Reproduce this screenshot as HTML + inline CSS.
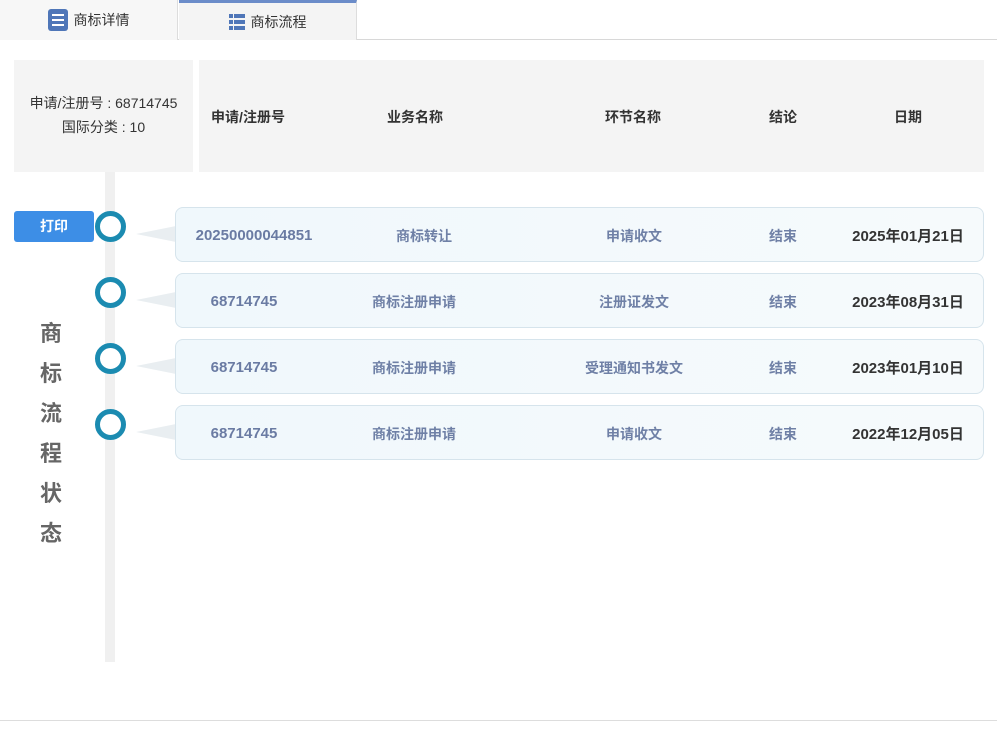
<!DOCTYPE html>
<html><head><meta charset="utf-8"><style>
*{margin:0;padding:0;box-sizing:border-box}
body{width:997px;height:729px;background:#fff;font-family:"Liberation Sans","Noto Sans CJK SC",sans-serif;position:relative;overflow:hidden}
.abs{position:absolute}
.tabbar{left:0;top:0;width:997px;height:40px;border-bottom:1px solid #d8d8d8;background:#fff}
.tab{top:0;height:40px;background:#f7f7f7;font-size:14px;color:#333;display:flex;align-items:center;justify-content:center;gap:6px}
.hdr{background:#f4f4f4;height:112px;top:60px}
.hd{font-size:14px;font-weight:bold;color:#333;top:107px;transform:translateX(-50%);white-space:nowrap}
.card{left:175px;width:809px;height:55px;border:1px solid #d6e4ec;border-radius:8px;background:linear-gradient(90deg,#f0f8fc,#f6fafc)}
.c{position:absolute;top:18px;font-size:14px;font-weight:bold;color:#6f80a6;transform:translateX(-50%);white-space:nowrap}
.n{font-size:15px;top:17px;font-weight:900;color:#6a7ba3;line-height:20px;top:16px}
.d{color:#333;font-size:15px;top:17px}
.circ{left:95px;width:31px;height:31px;border:5px solid #1b8bb1;border-radius:50%;background:#fff}
.tri{left:136px;width:0;height:0;border-top:8px solid transparent;border-bottom:8px solid transparent;border-right:40px solid #e9eef1}
</style></head><body>
<div class="abs tabbar"></div>
<div class="abs tab" style="left:0;width:178px;border-right:1px solid #ddd"><svg width="20" height="22" viewBox="0 0 20 22"><rect x="0" y="0" width="20" height="22" rx="3" fill="#4f76b8"/><rect x="4" y="5" width="12" height="2" fill="#fff"/><rect x="4" y="10" width="12" height="2" fill="#fff"/><rect x="4" y="15" width="12" height="2" fill="#fff"/></svg>商标详情</div>
<div class="abs tab" style="left:179px;width:178px;background:#f4f4f4;border-top:3px solid #6b8cc9;border-right:1px solid #ddd;height:40px"><svg width="16" height="16" viewBox="0 0 16 16" fill="#4f76b8"><rect x="0" y="0" width="4" height="4"/><rect x="5" y="0" width="11" height="4"/><rect x="0" y="6" width="4" height="4"/><rect x="5" y="6" width="11" height="4"/><rect x="0" y="12" width="4" height="4"/><rect x="5" y="12" width="11" height="4"/></svg>商标流程</div>
<div class="abs hdr" style="left:14px;width:179px"></div>
<div class="abs hdr" style="left:199px;width:785px"></div>
<div class="abs" style="left:14px;width:179px;top:91px;text-align:center;font-size:14px;color:#333;line-height:24px">申请/注册号 : 68714745<br>国际分类 : 10</div>
<div class="abs hd" style="left:248px">申请/注册号</div>
<div class="abs hd" style="left:415px">业务名称</div>
<div class="abs hd" style="left:633px">环节名称</div>
<div class="abs hd" style="left:783px">结论</div>
<div class="abs hd" style="left:908px">日期</div>
<div class="abs" style="left:105px;top:172px;width:10px;height:490px;background:#f0f0f0"></div>
<div class="abs" style="left:14px;top:211px;width:80px;height:31px;background:#3d8ee6;border-radius:3px;color:#fff;font-size:14px;font-weight:bold;text-align:center;line-height:31px">打印</div>
<div class="abs" style="left:36px;top:314px;width:30px;font-size:22px;font-weight:bold;color:#666;line-height:40px;text-align:center">商<br>标<br>流<br>程<br>状<br>态</div>
<div class="abs circ" style="top:211px"></div><div class="abs tri" style="top:226px"></div>
<div class="abs circ" style="top:277px"></div><div class="abs tri" style="top:292px"></div>
<div class="abs circ" style="top:343px"></div><div class="abs tri" style="top:358px"></div>
<div class="abs circ" style="top:409px"></div><div class="abs tri" style="top:424px"></div>
<div class="abs card" style="top:207px"><span class="c n" style="left:78px;top:18px"><b>20250000044851</b></span><span class="c" style="left:248px">商标转让</span><span class="c" style="left:458px">申请收文</span><span class="c" style="left:607px">结束</span><span class="c d" style="left:732px">2025年01月21日</span></div>
<div class="abs card" style="top:273px"><span class="c n" style="left:68px;top:18px"><b>68714745</b></span><span class="c" style="left:238px">商标注册申请</span><span class="c" style="left:458px">注册证发文</span><span class="c" style="left:607px">结束</span><span class="c d" style="left:732px">2023年08月31日</span></div>
<div class="abs card" style="top:339px"><span class="c n" style="left:68px;top:18px"><b>68714745</b></span><span class="c" style="left:238px">商标注册申请</span><span class="c" style="left:458px">受理通知书发文</span><span class="c" style="left:607px">结束</span><span class="c d" style="left:732px">2023年01月10日</span></div>
<div class="abs card" style="top:405px"><span class="c n" style="left:68px;top:18px"><b>68714745</b></span><span class="c" style="left:238px">商标注册申请</span><span class="c" style="left:458px">申请收文</span><span class="c" style="left:607px">结束</span><span class="c d" style="left:732px">2022年12月05日</span></div>
<div class="abs" style="left:0;top:720px;width:997px;height:1px;background:#ddd"></div>
</body></html>
